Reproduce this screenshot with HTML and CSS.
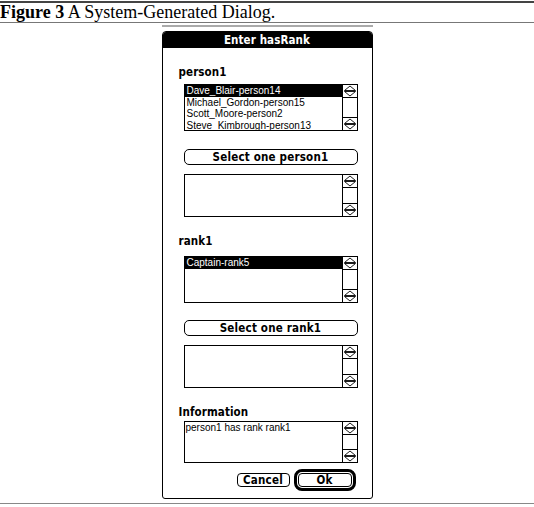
FILE: index.html
```html
<!DOCTYPE html>
<html>
<head>
<meta charset="utf-8">
<link rel="stylesheet" href="styles.css">
</head>
<body>
<div class="page">
  <div class="rule-top"></div>
  <div class="caption"><b>Figure 3</b> A System-Generated Dialog.</div>
  <div class="rule-mid"></div>
  <div class="figure">
    <div class="frame-top"></div>
    <div class="dialog">
      <div class="titlebar">Enter hasRank</div>
      <div class="body">
        <div class="label">person1</div>
        <div class="listbox tall">
          <div class="items">
            <div class="item sel">Dave_Blair-person14</div>
            <div class="item">Michael_Gordon-person15</div>
            <div class="item">Scott_Moore-person2</div>
            <div class="item">Steve_Kimbrough-person13</div>
          </div>
          <div class="scroll">
            <div class="arrows top"><svg width="14" height="12" viewBox="0 0 14 12"><path d="M7 1 L12.5 5.5 L1.5 5.5 Z M1.5 6.5 L12.5 6.5 L7 11 Z" fill="#fff" stroke="#000" stroke-width="0.9"/></svg></div>
            <div class="track"></div>
            <div class="arrows bottom"><svg width="14" height="12" viewBox="0 0 14 12"><path d="M7 1 L12.5 5.5 L1.5 5.5 Z M1.5 6.5 L12.5 6.5 L7 11 Z" fill="#fff" stroke="#000" stroke-width="0.9"/></svg></div>
          </div>
        </div>
        <div class="btn wide first">Select one person1</div>
        <div class="listbox short gap-sm">
          <div class="items"></div>
          <div class="scroll">
            <div class="arrows top"><svg width="14" height="12" viewBox="0 0 14 12"><path d="M7 1 L12.5 5.5 L1.5 5.5 Z M1.5 6.5 L12.5 6.5 L7 11 Z" fill="#fff" stroke="#000" stroke-width="0.9"/></svg></div>
            <div class="track"></div>
            <div class="arrows bottom"><svg width="14" height="12" viewBox="0 0 14 12"><path d="M7 1 L12.5 5.5 L1.5 5.5 Z M1.5 6.5 L12.5 6.5 L7 11 Z" fill="#fff" stroke="#000" stroke-width="0.9"/></svg></div>
          </div>
        </div>

        <div class="label">rank1</div>
        <div class="listbox tall gap-rank">
          <div class="items">
            <div class="item sel">Captain-rank5</div>
          </div>
          <div class="scroll">
            <div class="arrows top"><svg width="14" height="12" viewBox="0 0 14 12"><path d="M7 1 L12.5 5.5 L1.5 5.5 Z M1.5 6.5 L12.5 6.5 L7 11 Z" fill="#fff" stroke="#000" stroke-width="0.9"/></svg></div>
            <div class="track"></div>
            <div class="arrows bottom"><svg width="14" height="12" viewBox="0 0 14 12"><path d="M7 1 L12.5 5.5 L1.5 5.5 Z M1.5 6.5 L12.5 6.5 L7 11 Z" fill="#fff" stroke="#000" stroke-width="0.9"/></svg></div>
          </div>
        </div>
        <div class="btn wide second">Select one rank1</div>
        <div class="listbox short gap-sm">
          <div class="items"></div>
          <div class="scroll">
            <div class="arrows top"><svg width="14" height="12" viewBox="0 0 14 12"><path d="M7 1 L12.5 5.5 L1.5 5.5 Z M1.5 6.5 L12.5 6.5 L7 11 Z" fill="#fff" stroke="#000" stroke-width="0.9"/></svg></div>
            <div class="track"></div>
            <div class="arrows bottom"><svg width="14" height="12" viewBox="0 0 14 12"><path d="M7 1 L12.5 5.5 L1.5 5.5 Z M1.5 6.5 L12.5 6.5 L7 11 Z" fill="#fff" stroke="#000" stroke-width="0.9"/></svg></div>
          </div>
        </div>

        <div class="label">Information</div>
        <div class="listbox info">
          <div class="items"><div class="text">person1 has rank rank1</div></div>
          <div class="scroll">
            <div class="arrows top"><svg width="14" height="12" viewBox="0 0 14 12"><path d="M7 1 L12.5 5.5 L1.5 5.5 Z M1.5 6.5 L12.5 6.5 L7 11 Z" fill="#fff" stroke="#000" stroke-width="0.9"/></svg></div>
            <div class="track"></div>
            <div class="arrows bottom"><svg width="14" height="12" viewBox="0 0 14 12"><path d="M7 1 L12.5 5.5 L1.5 5.5 Z M1.5 6.5 L12.5 6.5 L7 11 Z" fill="#fff" stroke="#000" stroke-width="0.9"/></svg></div>
          </div>
        </div>

        <div class="buttons">
          <div class="btn small cancel">Cancel</div>
          <div class="default-ring"><div class="btn small ok">Ok</div></div>
        </div>
      </div>
    </div>
  </div>
  <div class="rule-bottom"></div>
</div>
</body>
</html>
```
FILE: styles.css
```css
html, body {
  margin: 0;
  padding: 0;
  background: #fff;
}

.page {
  width: 534px;
  height: 507px;
  overflow: hidden;
}

.rule-top {
  margin-top: 1px;
  height: 2px;
  background: #444;
}

.caption {
  font-family: "Liberation Serif", serif;
  font-size: 18px;
  line-height: 18px;
  color: #000;
  white-space: nowrap;
}

.caption b {
  font-weight: bold;
}

.rule-mid {
  margin-top: 1px;
  height: 1px;
  background: #777;
}

.figure {
  width: 211px;
  margin: 0 auto;
}

.frame-top {
  margin-top: 2px;
  height: 2px;
  background: #aaa;
}

.dialog {
  margin-top: 4px;
  border: 1px solid #000;
  border-radius: 4px 4px 3px 3px;
  overflow: hidden;
  background: #fff;
  font-family: "DejaVu Sans Condensed", "DejaVu Sans", sans-serif;
  font-stretch: condensed;
}

.titlebar {
  height: 16px;
  box-sizing: border-box;
  padding-top: 1px;
  background: #000;
  color: #fff;
  font-weight: bold;
  font-size: 11.5px;
  line-height: 15px;
  letter-spacing: 0.1px;
  text-align: center;
}

.body {
  padding: 0 14px 7px 21px;
  display: flex;
  flex-direction: column;
}

.label {
  margin-top: 18px;
  margin-left: -5px;
  font-weight: bold;
  font-size: 11.5px;
  line-height: 13px;
  letter-spacing: 0.1px;
  height: 13px;
}

.listbox {
  display: flex;
  border: 1px solid #000;
  box-sizing: border-box;
  margin-top: 5px;
}

.listbox.tall {
  height: 47px;
}

.listbox.short {
  height: 43px;
}

.listbox.info {
  height: 42px;
  margin-top: 2px;
}

.listbox.gap-sm {
  margin-top: 9px;
}

.listbox.gap-rank {
  margin-top: 8px;
}

.items {
  flex: 1;
  min-width: 0;
  font-family: "Liberation Sans", Arial, sans-serif;
  font-size: 10px;
}

.item {
  height: 11.7px;
  line-height: 11.7px;
  padding-left: 2px;
  white-space: nowrap;
}

.item.sel {
  background: #000;
  color: #fff;
}

.text {
  line-height: 11px;
  padding-left: 1px;
}

.scroll {
  width: 14px;
  border-left: 1px solid #000;
  display: flex;
  flex-direction: column;
}

.arrows {
  height: 12px;
  display: flex;
}

.arrows svg {
  display: block;
}

.arrows.top {
  border-bottom: 1px solid #000;
}

.arrows.bottom {
  border-top: 1px solid #000;
}

.track {
  flex: 1;
}

.btn {
  border: 1px solid #000;
  box-sizing: border-box;
  font-weight: bold;
  font-size: 11.5px;
  letter-spacing: 0.2px;
  text-align: center;
  background: #fff;
}

.btn.wide {
  height: 16px;
  line-height: 14px;
  border-radius: 5px;
}

.btn.first {
  margin-top: 18px;
}

.btn.second {
  margin-top: 17px;
}

.buttons {
  margin-top: 6px;
  display: flex;
  justify-content: flex-end;
  align-items: center;
  gap: 4px;
  padding-right: 2px;
}

.btn.small {
  height: 14px;
  line-height: 12px;
  border-radius: 4px;
}

.btn.cancel {
  width: 53px;
}

.default-ring {
  width: 62px;
  height: 22px;
  box-sizing: border-box;
  border: 3px solid #000;
  border-radius: 8px;
  padding: 1px;
}

.btn.ok {
  width: 100%;
}

.rule-bottom {
  margin-top: 4px;
  height: 1px;
  background: #888;
}
```
